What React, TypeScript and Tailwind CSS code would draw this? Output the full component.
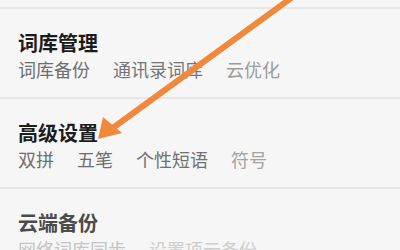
import React from 'react';

interface Section {
  title: string;
  titleColor: string;
  items: { label: string; color: string }[];
}

const sections: Section[] = [
  {
    title: '词库管理',
    titleColor: 'text-[#1c1c1c]',
    items: [
      { label: '词库备份', color: 'text-[#6e6e6e]' },
      { label: '通讯录词库', color: 'text-[#767676]' },
      { label: '云优化', color: 'text-[#9c9c9c]' },
    ],
  },
  {
    title: '高级设置',
    titleColor: 'text-[#1c1c1c]',
    items: [
      { label: '双拼', color: 'text-[#6e6e6e]' },
      { label: '五笔', color: 'text-[#6e6e6e]' },
      { label: '个性短语', color: 'text-[#707070]' },
      { label: '符号', color: 'text-[#a4a4a4]' },
    ],
  },
  {
    title: '云端备份',
    titleColor: 'text-[#4c4c4c]',
    items: [
      { label: '网络词库同步', color: 'text-[#c4c4c4]' },
      { label: '设置项云备份', color: 'text-[#cdcdcd]' },
    ],
  },
];

const App: React.FC = () => {
  return (
    <div
      className="relative w-[400px] h-[250px] overflow-hidden bg-[#f6f6f6]"
      style={{ fontFamily: '"Noto Sans CJK SC", "Noto Sans", sans-serif' }}
    >
      <div className="h-[7px]" />
      {sections.map((s) => (
        <div key={s.title} className="h-[90px] border-t-2 border-[#e6e6e6] pl-[18px] pt-[22px]">
          <div className={`text-[20px] leading-[24px] font-semibold ${s.titleColor}`}>{s.title}</div>
          <div className="mt-[3px] flex gap-[23px] text-[18px] leading-[22px] whitespace-nowrap">
            {s.items.map((it) => (
              <span key={it.label} className={it.color}>
                {it.label}
              </span>
            ))}
          </div>
        </div>
      ))}

      {/* orange pointer arrow drawn over the list */}
      <svg className="absolute inset-0 pointer-events-none" width="400" height="250" viewBox="0 0 400 250">
        <path d="M294 -4 L 110 130" stroke="#f0893c" strokeWidth="6" fill="none" strokeLinecap="round" />
        <polygon points="98,139 103,117 122,133" fill="#f0893c" />
      </svg>
    </div>
  );
};

export default App;
